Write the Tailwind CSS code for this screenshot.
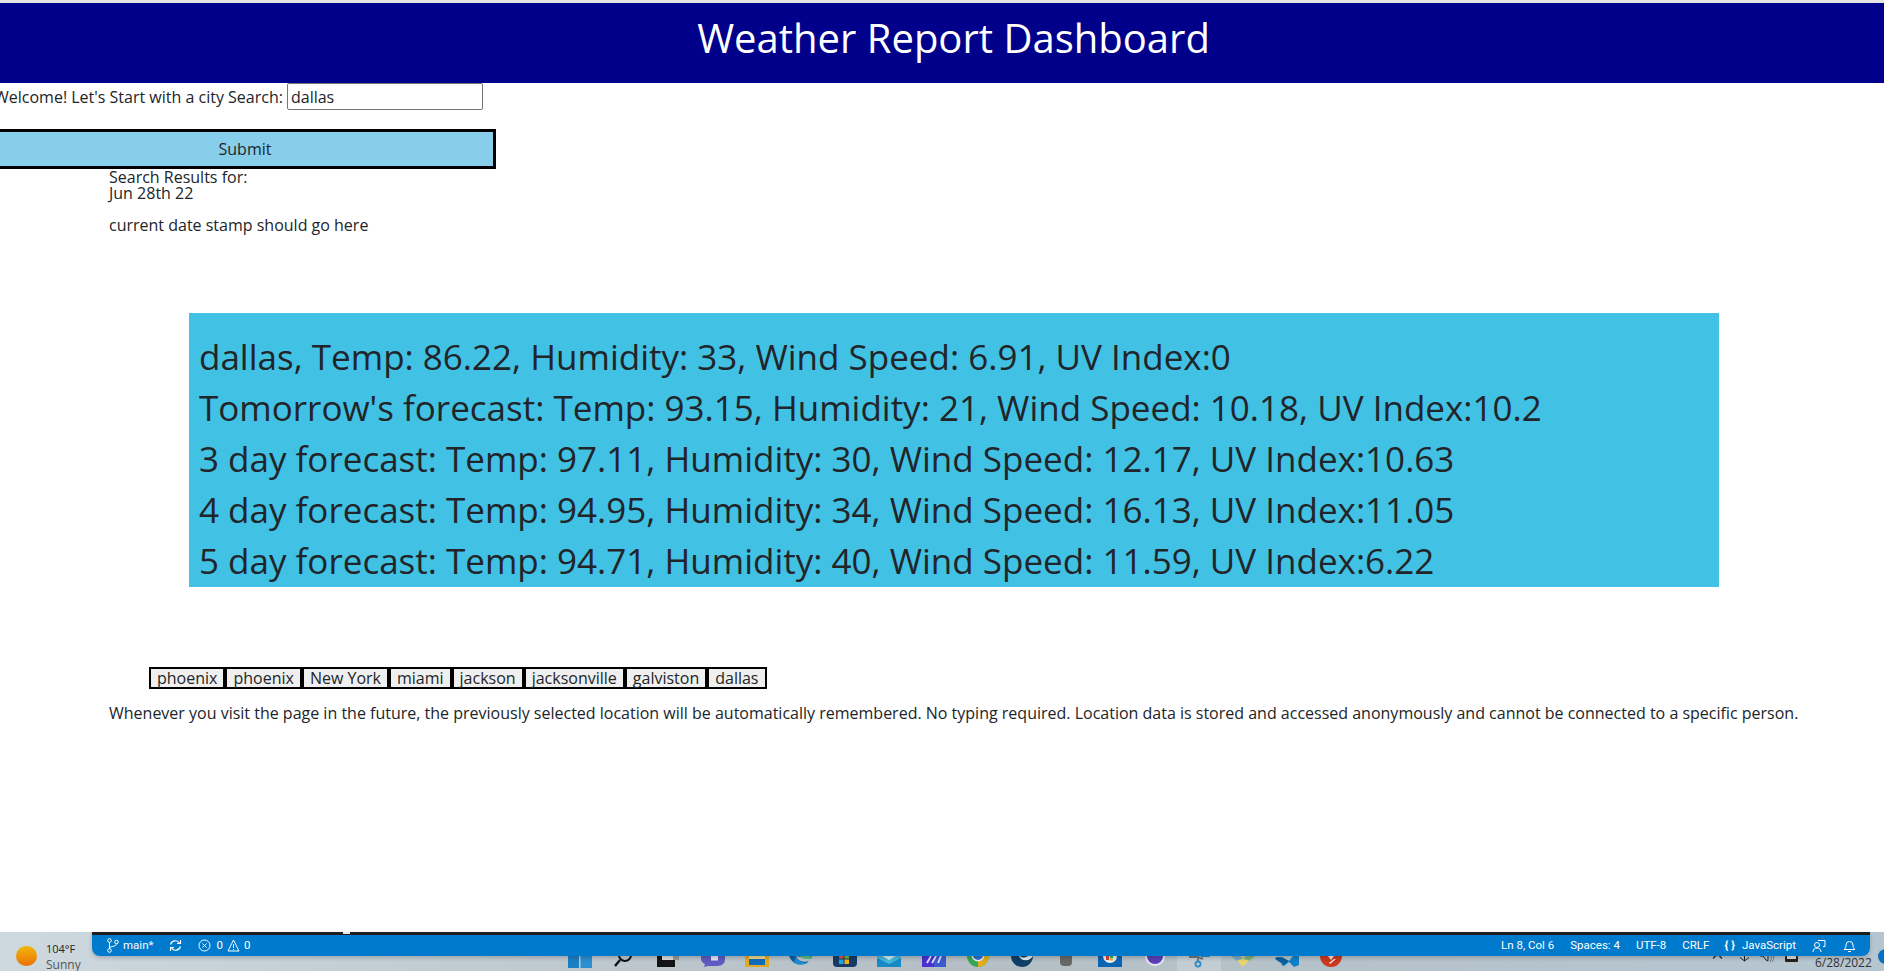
<!DOCTYPE html>
<html><head><meta charset="utf-8"><title>Weather Report Dashboard</title>
<script src="https://cdn.jsdelivr.net/npm/@tailwindcss/browser@4"></script></head>
<body class="bg-white">
<div class="relative flex flex-col w-[1884px] h-[971px] overflow-hidden font-['Open_Sans',sans-serif] text-[16px] leading-[24px] text-[#212529]">
  <main class="flex-1 min-h-0 flex flex-col">
    <div class="h-[3px] bg-[#e4e4e4]"></div>
    <header class="h-[80px] bg-[#00008b] text-white text-center text-[40px] leading-[70px] pl-[23px]">Weather Report Dashboard</header>
    <form class="-ml-[6px] flex flex-col items-start">
      <div class="flex items-start h-[28px]">
        <label class="leading-[28px]">Welcome! Let's Start with a city Search:</label>
        <input value="dallas" class="ml-[4px] w-[196px] h-[27px] px-[3px] border border-[#767676] rounded-[2px] text-[#212529]">
      </div>
      <button type="button" class="mt-[18px] w-[502px] h-[40px] bg-[#87ceeb] border-[3px] border-black">Submit</button>
    </form>
    <section class="ml-[109px]">
      <div class="leading-[16px]">Search Results for:</div>
      <div class="leading-[16px]">Jun 28th 22</div>
      <p class="mt-[12px]">current date stamp should go here</p>
    </section>
    <section class="ml-[189px] mt-[76px] w-[1530px] h-[274px] bg-[#41c1e4] text-[35px] leading-[51px] pt-[18px] pl-[10px] whitespace-nowrap">
      <div>dallas, Temp: 86.22, Humidity: 33, Wind Speed: 6.91, UV Index:0</div>
      <div>Tomorrow's forecast: Temp: 93.15, Humidity: 21, Wind Speed: 10.18, UV Index:10.2</div>
      <div>3 day forecast: Temp: 97.11, Humidity: 30, Wind Speed: 12.17, UV Index:10.63</div>
      <div>4 day forecast: Temp: 94.95, Humidity: 34, Wind Speed: 16.13, UV Index:11.05</div>
      <div>5 day forecast: Temp: 94.71, Humidity: 40, Wind Speed: 11.59, UV Index:6.22</div>
    </section>
    <div class="ml-[149px] mt-[80px] flex w-max border-2 border-black bg-black gap-[4px] h-[22px]">
      <button class="px-[6px] bg-[#efefef] leading-[18px]">phoenix</button>
      <button class="px-[6px] bg-[#efefef] leading-[18px]">phoenix</button>
      <button class="px-[6px] bg-[#efefef] leading-[18px]">New York</button>
      <button class="px-[6px] bg-[#efefef] leading-[18px]">miami</button>
      <button class="px-[6px] bg-[#efefef] leading-[18px]">jackson</button>
      <button class="px-[6px] bg-[#efefef] leading-[18px]">jacksonville</button>
      <button class="px-[6px] bg-[#efefef] leading-[18px]">galviston</button>
      <button class="px-[6px] bg-[#efefef] leading-[18px]">dallas</button>
    </div>
    <p class="ml-[109px] mt-[12px] whitespace-nowrap">Whenever you visit the page in the future, the previously selected location will be automatically remembered. No typing required. Location data is stored and accessed anonymously and cannot be connected to a specific person.</p>
  </main>
  <footer class="relative h-[39px] bg-gradient-to-r from-[#cdd8df] via-[#b5bfc5] to-[#b6c6d1] text-[12px]">
    <div class="absolute left-[16px] top-[14px] w-[21px] h-[20px] rounded-full bg-gradient-to-b from-[#f2b705] to-[#e8710a]"></div>
    <div class="absolute left-[46px] top-[10px] text-[11px] leading-[13px] text-[#222]">104°F<div class="text-[#555] text-[12px] leading-[12px] mt-[4px]">Sunny</div></div>
    <div class="absolute left-[558px] top-[24px] flex h-[15px]">
      <span class="w-[44.2px] flex justify-center"><svg width="24" height="12" viewBox="0 0 24 12"><rect width="11" height="12" fill="#1b7fc4"/><rect x="12.500" width="11.500" height="12" fill="#2b8fd2"/></svg></span>
      <span class="w-[44.2px] flex justify-center"><svg width="24" height="12" viewBox="0 0 24 12"><circle cx="13" cy="-1" r="6" fill="none" stroke="#111" stroke-width="2"/><path d="M8 4 3 10" stroke="#111" stroke-width="2.400"/></svg></span>
      <span class="w-[44.2px] flex justify-center"><svg width="24" height="12" viewBox="0 0 24 12"><rect x="1" width="18" height="11" fill="#141414"/><rect x="6" width="17" height="4" fill="#9a9a9a"/><rect x="6" width="11" height="4" fill="#dcdcdc"/></svg></span>
      <span class="w-[44.2px] flex justify-center"><svg width="24" height="12" viewBox="0 0 24 12"><path d="M0 0h24v3q0 7-8 7H7L3 11l1-3Q0 6 0 3z" fill="#5b5bc0"/><rect x="10" width="7" height="4.500" fill="#e4e4f2"/></svg></span>
      <span class="w-[44.2px] flex justify-center"><svg width="24" height="12" viewBox="0 0 24 12"><rect width="24" height="11" fill="#e3a91e"/><path d="M4 3h16v6H4z" fill="#0f6cbd"/><rect x="4" width="16" height="3" fill="#f1d58a"/></svg></span>
      <span class="w-[44.2px] flex justify-center"><svg width="24" height="12" viewBox="0 0 24 12"><path d="M0 0h23a12 12 0 0 1-23 0z" fill="#0f5ea8"/><path d="M7 0a9 7 0 0 0 16 3z" fill="#b8c2c8"/><path d="M11 0h11q1 3-4 3-5 0-7-3z" fill="#5cbf7a"/><path d="M7 0q2 7 12 7-8 3-14 0z" fill="#1d8dd3"/></svg></span>
      <span class="w-[44.2px] flex justify-center"><svg width="24" height="12" viewBox="0 0 24 12"><path d="M0 0h24v7q0 4-4 4H4q-4 0-4-4z" fill="#173b66"/><rect x="6" width="4.500" height="2.500" fill="#e4572e"/><rect x="11.500" width="4.500" height="2.500" fill="#7cb82f"/><rect x="6" y="3.500" width="4.500" height="4.500" fill="#1ea6e8"/><rect x="11.500" y="3.500" width="4.500" height="4.500" fill="#f4b018"/></svg></span>
      <span class="w-[44.2px] flex justify-center"><svg width="24" height="11" viewBox="0 0 24 11"><rect width="24" height="11" fill="#1689c6"/><path d="M0 2 12 8 24 2V0H0z" fill="#45b7dd"/><path d="M5 0h14l-7 4z" fill="#d8eef6"/></svg></span>
      <span class="w-[44.2px] flex justify-center"><svg width="24" height="11" viewBox="0 0 24 11"><rect width="24" height="11" fill="#4b30d2"/><rect x="12" width="12" height="11" fill="#3b5cd0"/><path d="M5 7 9 0M10 7l4-7M16 7l3-7" stroke="#e3dfff" stroke-width="1.800"/></svg></span>
      <span class="w-[44.2px] flex justify-center"><svg width="22" height="11" viewBox="0 0 22 11"><path d="M0 0h22a11 11 0 0 1-22 0z" fill="#3aa655"/><path d="M11 11A11 11 0 0 0 22 0H11z" fill="#e0ae1c"/><circle cx="11" cy="-1" r="6.500" fill="#e8eef2"/><circle cx="11" cy="-1" r="5" fill="#2b6fd0"/></svg></span>
      <span class="w-[44.2px] flex justify-center"><svg width="22" height="11" viewBox="0 0 22 11"><path d="M0 0h22a11 11 0 0 1-22 0z" fill="#123f66"/><path d="M0 0h9q3 3 8 0h5q-3 5-9 4-3 0-5-4z" fill="#e4eef2"/></svg></span>
      <span class="w-[44.2px] flex justify-center"><svg width="12" height="10" viewBox="0 0 12 10"><path d="M0 0h12v6q0 4-4 4H4q-4 0-4-4z" fill="#676767"/></svg></span>
      <span class="w-[44.2px] flex justify-center"><svg width="24" height="11" viewBox="0 0 24 11"><rect width="24" height="11" fill="#0a66b5"/><path d="M5 0h14a7 7 0 0 1-14 0z" fill="#eee"/><rect x="8" width="3" height="4" fill="#d9432f"/><rect x="12" width="3" height="2" fill="#3a5"/><rect x="12" y="2.500" width="3" height="2" fill="#e8b13a"/></svg></span>
      <span class="w-[44.2px] flex justify-center"><svg width="20" height="10" viewBox="0 0 20 10"><path d="M0 0h20a10 10 0 0 1-20 0z" fill="#e8e8ee"/><path d="M2 0h16a8 8 0 0 1-16 0z" fill="#5a3fb5"/></svg></span>
      <span class="w-[44.2px] flex justify-center bg-white/20"><svg width="24" height="12" viewBox="0 0 24 12"><path d="M2 1h9M16 3 11 1" stroke="#777" stroke-width="2"/><path d="M14 0h9" stroke="#2a8fd0" stroke-width="2"/><circle cx="11" cy="8" r="2.500" fill="none" stroke="#2a8fd0" stroke-width="1.800"/><path d="M11 1v4" stroke="#777" stroke-width="2"/></svg></span>
      <span class="w-[44.2px] flex justify-center"><svg width="24" height="11" viewBox="0 0 24 11"><path d="M0 0h9l3 4 3-4h9l-6 5-6-1-6 1z" fill="#7fb06e"/><path d="M0 0h7l3 4-3 1z" fill="#7fa7d0"/><path d="M6 4.500 12 3l6 1.500L12 11z" fill="#e6d56e"/></svg></span>
      <span class="w-[44.2px] flex justify-center"><svg width="24" height="11" viewBox="0 0 24 11"><path d="M0 3 2 1l5 0 7 4 4-5h6v9l-5 2-5-5-5 4-3-1 4-4-6-3z" fill="#0f7fc9"/><path d="M0 3 2 1l6 1 6 3-5 4z" fill="#0b5f9e"/></svg></span>
      <span class="w-[44.2px] flex justify-center"><svg width="22" height="11" viewBox="0 0 22 11"><path d="M0 0h22a11 11 0 0 1-22 0z" fill="#c8391f"/><path d="M8 0h6L11 4zM14 3l2 0-6 5-1-1z" fill="#f3e9e0"/></svg></span>
    </div>
    <div class="absolute left-[1712px] top-[21px] flex items-start text-[#222]">
      <svg width="11" height="6" viewBox="0 0 11 6"><path d="M1 5.500 5.500 1 10 5.500" fill="none" stroke="#222" stroke-width="1.100"/></svg>
      <svg class="mt-[3px] ml-[16px]" width="11" height="7" viewBox="0 0 11 7"><path d="M5.500 0v5M1 1.500 5.500 5 10 1.500" fill="none" stroke="#222"/></svg>
      <svg class="mt-[3px] ml-[10px]" width="15" height="7" viewBox="0 0 15 7"><path d="M0 0h3l3 4 2 1V0" fill="none" stroke="#222"/><path d="M11 0q1 3-1 6M14 0q0 4-2 6" fill="none" stroke="#777"/></svg>
      <svg class="mt-[3px] ml-[10px]" width="13" height="7" viewBox="0 0 13 7"><rect x="0" y="0" width="13" height="6" rx="1" fill="#222"/><rect x="2" y="0" width="9" height="3" fill="#ddd"/></svg>
    </div>
    <div class="absolute left-[1815px] top-[24px] text-[12px] leading-[14px] text-[#333]">6/28/2022</div>
    <div class="absolute left-[1878px] top-[17px] w-[15px] h-[15px] rounded-full bg-[#0a6fc4]"></div>
    <div class="absolute left-[92px] top-0 w-[1778px] h-[24px] flex flex-col shadow-[0_2px_4px_rgba(0,0,0,0.2)] rounded-b-[8px] font-['Roboto',sans-serif]">
      <div class="relative h-[3px] bg-[#1e1e1e]"><div class="absolute left-[251px] top-[0] w-[7px] h-[2px] bg-[#e8e8e8]"></div></div>
      <div class="h-[21px] bg-[#007acc] text-white rounded-b-[8px] flex items-center justify-between pl-[15px] pr-[14px] text-[11.5px] leading-none">
        <div class="flex items-center">
          <svg class="mr-[4px]" width="12" height="15" viewBox="0 0 12 15" fill="none" stroke="#fff"><circle cx="2.500" cy="2.500" r="1.800"/><circle cx="2.500" cy="12.500" r="1.800"/><circle cx="9.500" cy="4" r="1.800"/><path d="M2.500 4.300v6.400M9.500 5.800C9.500 9 3 7.500 2.500 10.700"/></svg>
          <span>main*</span>
          <svg class="ml-[16px]" width="13" height="13" viewBox="0 0 13 13" fill="none" stroke="#fff" stroke-width="1.200"><path d="M1.500 5.500a5 5 0 0 1 9-1.500M11.500 7.500a5 5 0 0 1-9 1.500"/><path d="M8 4.500h3.500V1M5 8.500H1.500V12"/></svg>
          <svg class="ml-[16px]" width="13" height="13" viewBox="0 0 13 13" fill="none" stroke="#fff"><circle cx="6.500" cy="6.500" r="5.500"/><path d="m4.500 4.500 4 4M8.500 4.500l-4 4"/></svg>
          <span class="ml-[5px]">0</span>
          <svg class="ml-[4px]" width="13" height="13" viewBox="0 0 13 13" fill="none" stroke="#fff"><path d="M6.500 1 12 12H1z"/><path d="M6.500 5v4M6.500 10v1"/></svg>
          <span class="ml-[4px]">0</span>
        </div>
        <div class="flex items-center">
          <span>Ln 8, Col 6</span><span class="ml-[16px]">Spaces: 4</span><span class="ml-[16px]">UTF-8</span><span class="ml-[16px]">CRLF</span>
          <span class="ml-[15px] font-bold flex gap-[3px]"><span>{</span><span>}</span></span><span class="ml-[7px]">JavaScript</span>
          <svg class="ml-[16px]" width="14" height="14" viewBox="0 0 14 14" fill="none" stroke="#fff"><circle cx="5" cy="6" r="2.500"/><path d="M1 13c0-3 2-4 4-4s4 1 4 4M6 1.500h7v6h-2"/></svg>
          <svg class="ml-[17px]" width="13" height="14" viewBox="0 0 13 14" fill="none" stroke="#fff"><path d="M1 10.500c1.500-1 2-2.500 2-4.500a3.500 3.500 0 0 1 7 0c0 2 .5 3.500 2 4.500zM5 12.500h3"/></svg>
        </div>
      </div>
    </div>
  </footer>
</div>
</body></html>
